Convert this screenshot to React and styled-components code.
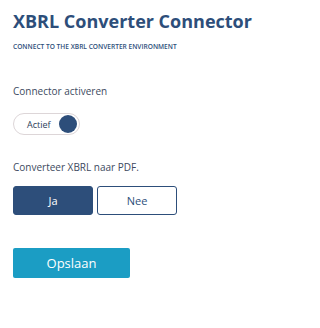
import React, { useState } from "react";
import styled, { createGlobalStyle } from "styled-components";

const GlobalStyle = createGlobalStyle`
  body {
    margin: 0;
    background: #ffffff;
    font-family: "Open Sans", "Noto Sans", sans-serif;
  }
`;

const Page = styled.section`
  display: flex;
  flex-direction: column;
  align-items: flex-start;
  padding: 8px 13px;
  width: 320px;
  box-sizing: border-box;
`;

const Title = styled.h1`
  margin: 0;
  font-size: 18px;
  font-weight: 700;
  color: #2d4e7a;
  line-height: 26px;
`;

const Subtitle = styled.div`
  margin-top: 8px;
  font-size: 6.6px;
  font-weight: 600;
  color: #2d4e7a;
  text-transform: uppercase;
`;

const Label = styled.div`
  font-size: 10px;
  color: #3d4a60;
  margin-top: ${({ $top }) => $top}px;
`;

const Toggle = styled.button`
  display: flex;
  align-items: center;
  justify-content: space-between;
  width: 67px;
  height: 22px;
  margin-top: 15px;
  padding: 0 2px 0 13px;
  box-sizing: border-box;
  border: 1px solid #ddd6d8;
  border-radius: 11px;
  background: #ffffff;
  font-family: inherit;
  font-size: 9px;
  font-weight: 400;
  color: #2d3e5a;
  cursor: pointer;
`;

const Knob = styled.span`
  width: 18px;
  height: 18px;
  border-radius: 50%;
  background: #2d4e7a;
`;

const ChoiceRow = styled.div`
  display: flex;
  gap: 4px;
  margin-top: 12px;
`;

const Choice = styled.button`
  width: 80px;
  height: 29px;
  border-radius: 3px;
  border: 1px solid #2d4e7a;
  background: ${({ $active }) => ($active ? "#2d4e7a" : "#ffffff")};
  color: ${({ $active }) => ($active ? "#ffffff" : "#2d4e7a")};
  font-family: inherit;
  font-size: 11px;
  cursor: pointer;
`;

const SaveButton = styled.button`
  width: 117px;
  height: 30px;
  margin-top: 33px;
  border: none;
  border-radius: 2px;
  background: #1b9dc4;
  color: #ffffff;
  font-family: inherit;
  font-size: 13px;
  cursor: pointer;
`;

export default function App() {
  const [convert, setConvert] = useState(true);

  return (
    <>
      <GlobalStyle />
      <Page>
        <Title>XBRL Converter Connector</Title>
        <Subtitle>Connect to the XBRL converter environment</Subtitle>
        <Label $top={33}>Connector activeren</Label>
        <Toggle>
          Actief
          <Knob />
        </Toggle>
        <Label $top={25}>Converteer XBRL naar PDF.</Label>
        <ChoiceRow>
          <Choice $active={convert} onClick={() => setConvert(true)}>
            Ja
          </Choice>
          <Choice $active={!convert} onClick={() => setConvert(false)}>
            Nee
          </Choice>
        </ChoiceRow>
        <SaveButton>Opslaan</SaveButton>
      </Page>
    </>
  );
}
